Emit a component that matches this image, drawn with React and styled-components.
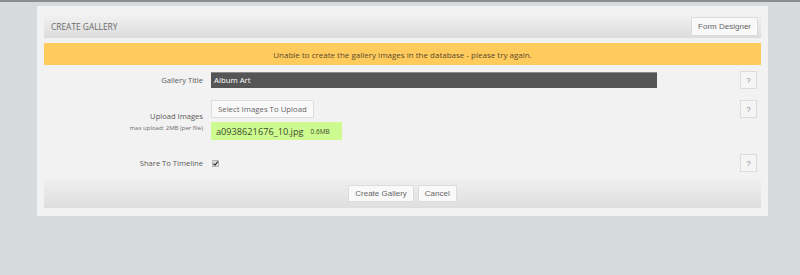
import React from 'react'
import styled, { createGlobalStyle } from 'styled-components'

const GlobalStyle = createGlobalStyle`
  html, body {
    margin: 0;
    padding: 0;
  }
  body {
    background: #d7dadc;
    border-top: 2px solid #8d8d8d;
    font-family: 'Open Sans', 'Liberation Sans', sans-serif;
    height: 273px;
    overflow: hidden;
  }
`

const Panel = styled.div`
  margin: 4px 0 0 37px;
  width: 731px;
  box-sizing: border-box;
  padding: 8px 7px 8px 7px;
  background: #f2f2f2;
`

const HeaderBar = styled.div`
  display: flex;
  align-items: center;
  justify-content: space-between;
  height: 24px;
  padding: 0 3px 0 7px;
  background: linear-gradient(#f2f2f2, #dcdcdc);
`

const Title = styled.h2`
  margin: 0;
  font-size: 8.4px;
  font-weight: 400;
  color: #6a6a6a;
`

const Button = styled.button`
  height: ${p => p.$h || 18}px;
  padding: 0 ${p => p.$px || 6}px;
  background: #f9f9f9;
  border: 1px solid #dcdcdc;
  border-radius: 1px;
  color: #666;
  font-family: ${p => p.$open ? "'Open Sans', sans-serif" : "'Liberation Sans', Arial, sans-serif"};
  font-size: ${p => p.$fs || 8}px;
  cursor: pointer;
`

const Alert = styled.div`
  margin-top: 5px;
  height: 22px;
  display: flex;
  align-items: center;
  justify-content: center;
  background: #ffcb5c;
  color: #594a2c;
  font-size: 8px;
`

const FormRow = styled.div`
  display: grid;
  grid-template-columns: 159px 446px 1fr 17px;
  column-gap: 8px;
  align-items: ${p => p.$align || 'start'};
  margin-top: ${p => p.$top}px;
  padding-right: 4px;
`

const Label = styled.div`
  text-align: right;
  color: #595959;
  font-size: 7.6px;
  line-height: 12px;
  padding-top: ${p => p.$pt || 0}px;
`

const SubLabel = styled.div`
  font-size: 6px;
  line-height: 9px;
  color: #6a6a6a;
  margin-top: 2px;
`

const DarkInput = styled.div`
  height: 16px;
  margin-top: 1px;
  box-sizing: border-box;
  background: #555;
  border-top: 1px solid #8a8a8a;
  color: #fff;
  font-size: 7.8px;
  line-height: 15px;
  padding-left: 3px;
`

const HelpButton = styled.button`
  width: 17px;
  height: 18px;
  padding: 0;
  background: #f5f5f5;
  border: 1px solid #dcdcdc;
  color: #8a8a8a;
  font-family: 'Liberation Sans', Arial, sans-serif;
  font-size: 8px;
  grid-column: 4;
`

const FieldStack = styled.div`
  display: flex;
  flex-direction: column;
  align-items: flex-start;
  gap: 4px;
`

const FileChip = styled.div`
  width: 131px;
  height: 18px;
  box-sizing: border-box;
  display: flex;
  align-items: center;
  gap: 7px;
  padding-left: 5px;
  background: #cdfb8f;
  color: #3d4a30;
  font-size: 9.2px;
`

const FileSize = styled.span`
  font-size: 6.5px;
`

const Check = styled.span`
  display: block;
  width: 5px;
  height: 5px;
  margin-left: 1px;
  background: #dcdcdc;
  border: 1px solid #b5b5b5;
  position: relative;
  svg {
    position: absolute;
    left: -1px;
    top: -1px;
  }
`

const CheckCell = styled.div`
  display: flex;
  align-items: center;
`

const Footer = styled.div`
  margin-top: 6px;
  height: 30px;
  display: flex;
  align-items: center;
  justify-content: center;
  gap: 4px;
  background: linear-gradient(#f0f0f0, #dedede);
`

export default function App () {
  return (
    <>
      <GlobalStyle />
      <Panel>
        <HeaderBar>
          <Title>CREATE GALLERY</Title>
          <Button $h={19} $px={6}>Form Designer</Button>
        </HeaderBar>
        <Alert>Unable to create the gallery images in the database - please try again.</Alert>

        <FormRow $top={6}>
          <Label $pt={3}>Gallery Title</Label>
          <DarkInput>Album Art</DarkInput>
          <HelpButton>?</HelpButton>
        </FormRow>

        <FormRow $top={11}>
          <Label $pt={10}>
            Upload Images
            <SubLabel>max upload: 2MB (per file)</SubLabel>
          </Label>
          <FieldStack>
            <Button $open $h={18} $px={6} $fs={7.8}>Select Images To Upload</Button>
            <FileChip>a0938621676_10.jpg <FileSize>0.6MB</FileSize></FileChip>
          </FieldStack>
          <HelpButton>?</HelpButton>
        </FormRow>

        <FormRow $top={14} $align='center'>
          <Label>Share To Timeline</Label>
          <CheckCell>
            <Check>
              <svg width='7' height='7' viewBox='0 0 7 7'>
                <path d='M1.5 3.6 L3 5.2 L5.8 1.6' fill='none' stroke='#333' strokeWidth='1.2' />
              </svg>
            </Check>
          </CheckCell>
          <HelpButton>?</HelpButton>
        </FormRow>

        <Footer>
          <Button $h={17} $px={6}>Create Gallery</Button>
          <Button $h={17} $px={6}>Cancel</Button>
        </Footer>
      </Panel>
    </>
  )
}
